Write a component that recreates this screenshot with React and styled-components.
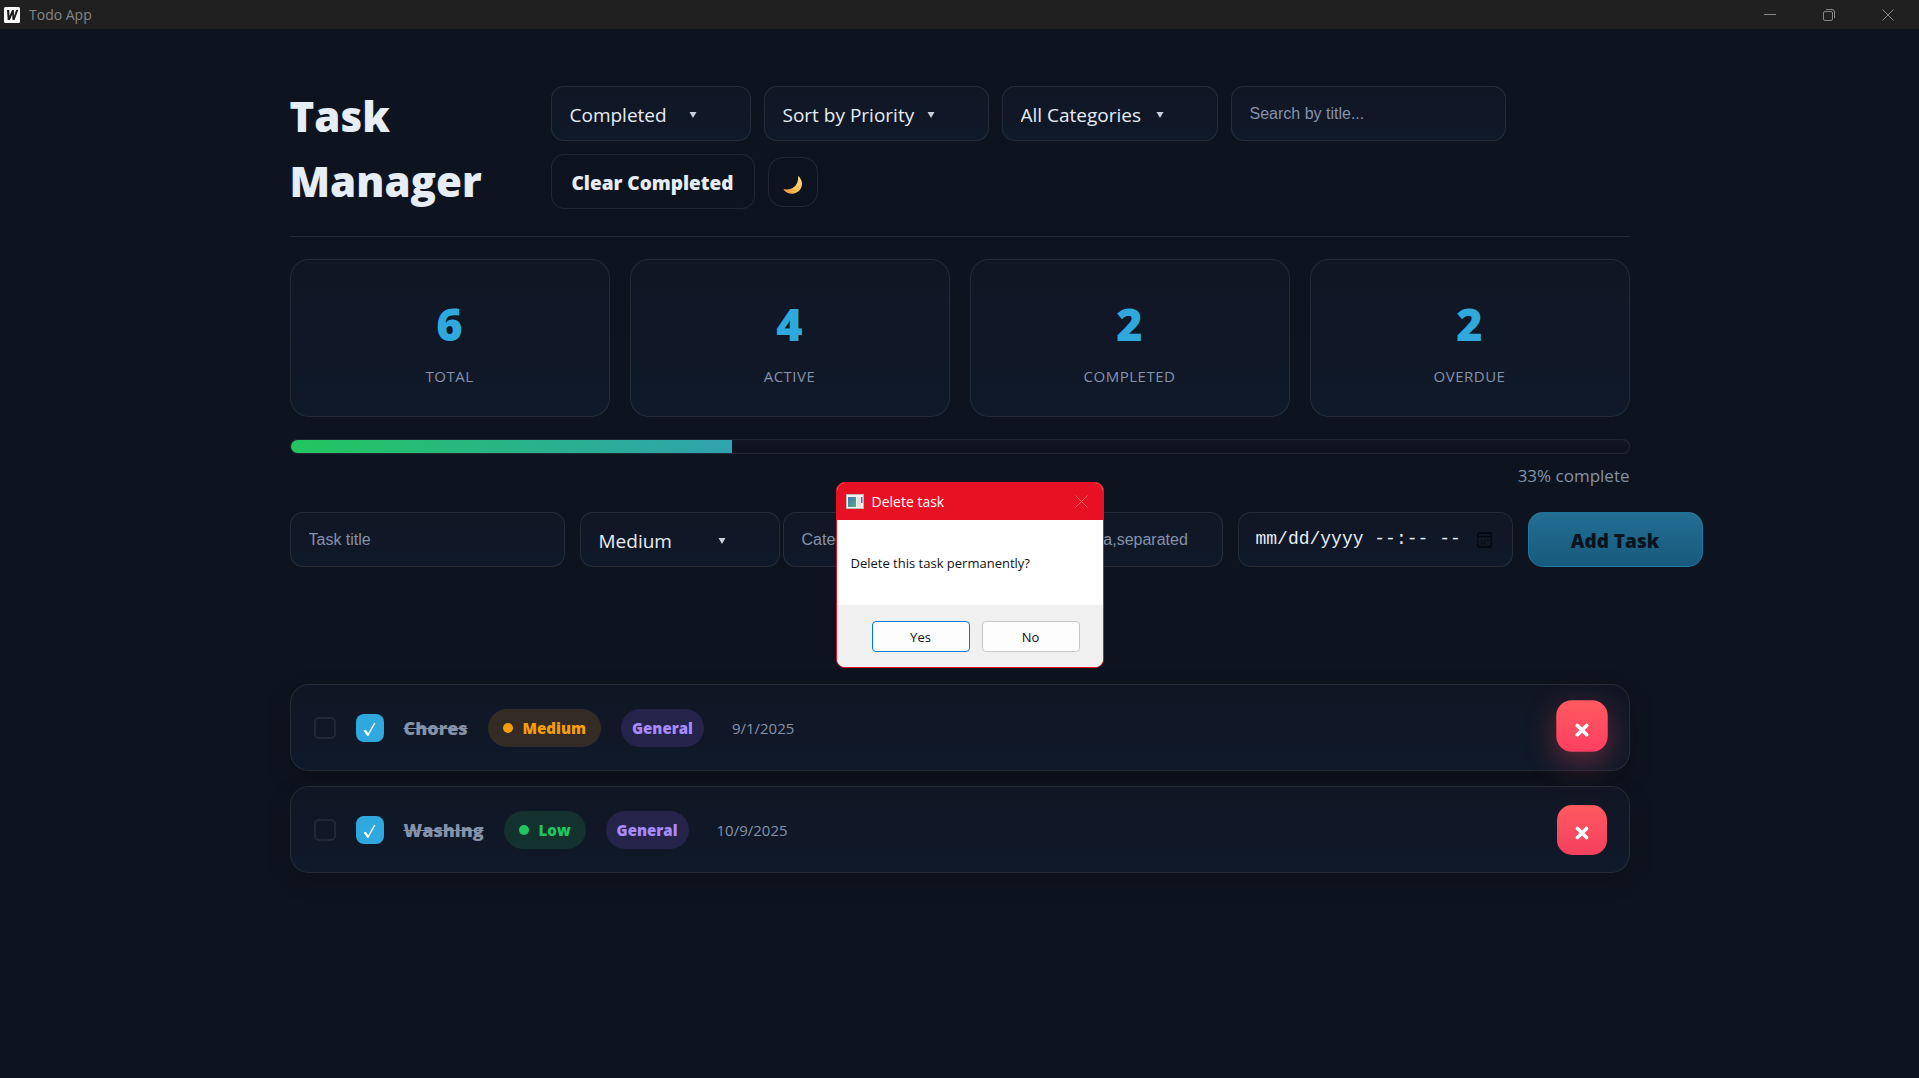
import React from "react";
import styled, { createGlobalStyle, css } from "styled-components";

const ui = `"Open Sans", "Noto Sans", sans-serif`;
const line = "rgba(255, 255, 255, 0.09)";
const panel = "linear-gradient(180deg, #111624 0%, #0f1929 100%)";

const GlobalStyle = createGlobalStyle`
  * { box-sizing: border-box; }
  body {
    margin: 0;
    min-height: 100vh;
    background: #0e141f;
    color: #e6edf5;
    font: 16px/24px ${ui};
  }
  button, select, input { font-family: inherit; color: inherit; margin: 0; }
  h1, h2, p, ul { margin: 0; padding: 0; }
`;

const WindowBar = styled.header`
  display: flex;
  align-items: center;
  height: 29px;
  padding: 0 2px 0 4px;
  gap: 9px;
  background: #202020;
  color: #868686;
  font-size: 14px;
  line-height: 20px;
`;

const WindowTitle = styled.span`
  flex: 1;
`;

const WindowButtons = styled.div`
  display: flex;
`;

const WindowButton = styled.button`
  width: 59px;
  height: 28px;
  display: grid;
  place-items: center;
  padding: 0;
  border: 0;
  background: none;
  color: #868686;
`;

const Page = styled.main`
  width: min(1340px, calc(100% - 48px));
  margin: 0 auto;
  padding: 54px 0 40px;
`;

const Header = styled.div`
  display: flex;
  align-items: flex-start;
  justify-content: space-between;
  padding-bottom: 23px;
  border-bottom: 1px solid ${line};
`;

const Title = styled.h1`
  width: 261px;
  font-size: 42px;
  line-height: 65px;
  font-weight: 800;
`;

const Controls = styled.div`
  flex: 1;
  display: flex;
  flex-wrap: wrap;
  align-items: center;
  gap: 13px;
  padding-top: 3px;
`;

const field = css`
  height: 55px;
  padding: 0 18px;
  border: 1px solid ${line};
  border-radius: 13px;
  background: ${panel};
`;

const SelectWrap = styled.div`
  position: relative;
  width: ${(p) => p.$width}px;

  svg {
    position: absolute;
    top: 26px;
    right: 54px;
    pointer-events: none;
  }
`;

const SelectBox = styled.select`
  ${field}
  appearance: none;
  width: 100%;
  padding-top: 2px;
  font-size: 19px;
  line-height: 28px;
`;

const TextBox = styled.input`
  ${field}
  width: ${(p) => p.$width || "100%"};
  min-width: 0;
  font: 16px "Liberation Sans", Arial, sans-serif;

  &::placeholder {
    color: #8492aa;
    opacity: 1;
  }
`;

const DateField = styled.div`
  ${field}
  display: flex;
  align-items: center;
  gap: 8px;
  padding: 0 20px 0 17px;
`;

const DateBox = styled.input`
  flex: 1;
  min-width: 0;
  padding: 0 0 2px;
  border: 0;
  background: none;
  font: 18px "Liberation Mono", "Courier New", monospace;

  &::placeholder {
    color: #e6edf5;
    opacity: 1;
  }
`;

const CalendarButton = styled.button`
  display: grid;
  padding: 0;
  border: 0;
  background: none;
  color: #05070b;
`;

const GhostButton = styled.button`
  height: 55px;
  width: 204px;
  padding: 2px 0 0;
  border: 1px solid ${line};
  border-radius: 13px;
  background: transparent;
  font-size: 19px;
  font-weight: 800;
`;

const ThemeButton = styled(GhostButton)`
  width: 50px;
  height: 50px;
  display: grid;
  place-items: center;
  padding-top: 6px;
  border-radius: 15px;
`;

const Stats = styled.section`
  display: grid;
  grid-template-columns: repeat(4, 1fr);
  gap: 20px;
  margin-top: 22px;
`;

const StatCard = styled.div`
  display: flex;
  flex-direction: column;
  align-items: center;
  gap: 6px;
  padding: 30px 0 28px;
  border: 1px solid ${line};
  border-radius: 19px;
  background: ${panel};
`;

const StatValue = styled.strong`
  color: #2fa9dd;
  font-size: 45px;
  line-height: 68px;
  font-weight: 800;
`;

const StatLabel = styled.span`
  color: #8492aa;
  font-size: 15px;
  line-height: 24px;
  letter-spacing: 0.5px;
  text-transform: uppercase;
`;

const Track = styled.div`
  height: 15px;
  margin-top: 22px;
  overflow: hidden;
  border: 1px solid ${line};
  border-radius: 8px;
  background: linear-gradient(180deg, #111524, #0c1220);
`;

const Fill = styled.div`
  height: 100%;
  background: linear-gradient(90deg, #22c55e, #2fa3b0);
`;

const ProgressNote = styled.p`
  margin-top: 8px;
  color: #8492aa;
  font-size: 17px;
  line-height: 27px;
  text-align: right;
`;

const AddForm = styled.form`
  display: grid;
  grid-template-columns: 275px 188px 205px 220px 275px 175px;
  gap: 15px;
  margin-top: 23px;
`;

const AddButton = styled.button`
  height: 55px;
  padding: 2px 0 0;
  border: 1px solid rgba(47, 169, 221, 0.3);
  border-radius: 15px;
  background: linear-gradient(180deg, #236e93, #165b7d);
  color: #0a141f;
  font-size: 19px;
  font-weight: 800;
`;

const TaskList = styled.ul`
  display: grid;
  gap: 15px;
  margin-top: 117px;
  list-style: none;
`;

const TaskRow = styled.li`
  display: flex;
  align-items: center;
  gap: 20px;
  height: 87px;
  padding: 0 22px 0 23px;
  border: 1px solid ${line};
  border-radius: 19px;
  background: ${panel};
  box-shadow: 0 8px 24px rgba(0, 0, 0, 0.18);
`;

const PickBox = styled.input`
  appearance: none;
  width: 22px;
  height: 22px;
  margin: 0;
  border: 2px solid #212838;
  border-radius: 5px;
`;

const DoneButton = styled.button`
  width: 28px;
  height: 28px;
  display: grid;
  place-items: center;
  padding: 2px 0 0;
  border: 0;
  border-radius: 8px;
  background: #2fa9dd;
  color: #fff;
`;

const TaskName = styled.span`
  color: #8492aa;
  font-size: 18px;
  font-weight: 800;
  text-decoration: line-through;
`;

const tones = {
  medium: ["#f59e0b", "#342b24"],
  low: ["#22c55e", "#12312f"],
  category: ["#a78bfa", "#26234a"],
};

const Pill = styled.span`
  display: flex;
  align-items: center;
  gap: 10px;
  height: 38px;
  padding: 0 ${(p) => (p.$tone === "category" ? 11 : 15)}px;
  border-radius: 19px;
  background: ${(p) => tones[p.$tone][1]};
  color: ${(p) => tones[p.$tone][0]};
  font-size: 15px;
  font-weight: 800;
`;

const Dot = styled.span`
  width: 10px;
  height: 10px;
  border-radius: 50%;
  background: currentColor;
`;

const DueDate = styled.time`
  flex: 1;
  padding-left: 8px;
  color: #8492aa;
  font-size: 15px;
`;

const DeleteButton = styled.button`
  width: 50px;
  height: 50px;
  display: grid;
  place-items: center;
  padding: 7px 0 0;
  border: 0;
  border-radius: 15px;
  background: linear-gradient(180deg, #ff5a5f, #f43f5e);
  color: #fff;
  ${(p) =>
    p.$active &&
    css`
      transform: translateY(-2px) scale(1.03);
      background: linear-gradient(180deg, #ff5a60, #ff3f60);
      box-shadow: 0 10px 30px rgba(255, 77, 90, 0.35);
    `}
`;

const Dialog = styled.div`
  position: fixed;
  top: 482px;
  left: calc(50% - 124px);
  width: 268px;
  overflow: hidden;
  border: 1px solid #e81123;
  border-radius: 9px;
  background: #fff;
  color: #111;
  font-size: 13px;
  line-height: 20px;
`;

const DialogHead = styled.div`
  display: flex;
  align-items: center;
  gap: 8px;
  height: 37px;
  padding: 0 15px 0 9px;
  background: #e81123;
  color: #fff;
`;

const DialogTitle = styled.h2`
  flex: 1;
  font-size: 14px;
  line-height: 20px;
  font-weight: 400;
`;

const DialogClose = styled.button`
  display: grid;
  padding: 0;
  border: 0;
  background: none;
  color: #f4626d;
`;

const DialogText = styled.p`
  height: 85px;
  padding: 33px 14px 0;
`;

const DialogFoot = styled.div`
  display: flex;
  justify-content: flex-end;
  gap: 12px;
  padding: 16px 23px 15px;
  background: #f0f0f0;
`;

const DialogButton = styled.button`
  width: 98px;
  height: 31px;
  padding: 0;
  border: 1px solid ${(p) => (p.$primary ? "#0078d4" : "#c8c8c8")};
  border-radius: 4px;
  background: #fdfdfd;
  font-size: 13px;
`;

function Select({ label, value, options, width }) {
  return (
    <SelectWrap $width={width}>
      <SelectBox aria-label={label} defaultValue={value}>
        {options.map((o) => (
          <option key={o}>{o}</option>
        ))}
      </SelectBox>
      <svg width="8" height="6" viewBox="0 0 8 6">
        <path d="M0.5 0h7L4 6z" fill="#c9d1db" />
      </svg>
    </SelectWrap>
  );
}

function Moon() {
  return (
    <svg width="20" height="20" viewBox="0 0 20 20">
      <defs>
        <linearGradient id="moon" x1="0" y1="1" x2="1" y2="0">
          <stop offset="0" stopColor="#f08a3c" />
          <stop offset="0.45" stopColor="#ffc35c" />
          <stop offset="1" stopColor="#ffe08a" />
        </linearGradient>
      </defs>
      <path d="M15 1c3.600 2.600 5 7.400 3.200 11.600C16 18 9.600 20.400 4.400 17.800 2.700 17 1.300 15.700.4 14.100c5 1 9.300-.2 12-3.300C14.600 8.200 15.500 5 15 1z" fill="url(#moon)" />
      <circle cx="15.500" cy="12.500" r="1" fill="#f3aa4d" />
      <circle cx="11" cy="15.500" r="0.900" fill="#f3aa4d" />
    </svg>
  );
}

function Cross() {
  return (
    <svg width="14" height="14" viewBox="0 0 14 14" fill="none" stroke="currentColor">
      <path d="M2.500 2.500l9 9M11.500 2.500l-9 9" strokeWidth="3.600" strokeLinecap="round" />
    </svg>
  );
}

function Calendar() {
  return (
    <svg width="15" height="16" viewBox="0 0 15 16" fill="none" stroke="currentColor">
      <rect x="0.750" y="1" width="13.500" height="14" rx="2" strokeWidth="1.300" />
      <path d="M1 4.500h13" strokeWidth="1.200" />
      <path d="M4 8.500h1.500M7 8.500h1.500M10 8.500h1.500M4 11.500h1.500M7 11.500h1.500" strokeWidth="1.500" />
    </svg>
  );
}

const stats = [
  ["6", "Total"],
  ["4", "Active"],
  ["2", "Completed"],
  ["2", "Overdue"],
];

const tasks = [
  { name: "Chores", tone: "medium", priority: "Medium", due: "9/1/2025", active: true },
  { name: "Washing", tone: "low", priority: "Low", due: "10/9/2025" },
];

export default function App() {
  return (
    <>
      <GlobalStyle />
      <WindowBar>
        <svg width="16" height="16" viewBox="0 0 16 16">
          <rect width="16" height="16" rx="1.500" fill="#fff" />
          <path d="M3 3h2.300l.1 6L8 3h1.800l.3 6L12 3h2.200l-3.600 10H8.500L8.200 7.500 5.900 13H3.700z" fill="#1c1c1c" />
        </svg>
        <WindowTitle>Todo App</WindowTitle>
        <WindowButtons>
          <WindowButton aria-label="Minimize">
            <svg width="12" height="12" stroke="currentColor"><path d="M0 5.500h12" /></svg>
          </WindowButton>
          <WindowButton aria-label="Restore">
            <svg width="12" height="12" fill="none" stroke="currentColor">
              <rect x="0.500" y="2.500" width="9" height="9" rx="1.500" />
              <path d="M3 .5h6a2.500 2.500 0 0 1 2.500 2.500v6" />
            </svg>
          </WindowButton>
          <WindowButton aria-label="Close">
            <svg width="12" height="12" stroke="currentColor"><path d="M.5.5l11 11M11.500.5l-11 11" /></svg>
          </WindowButton>
        </WindowButtons>
      </WindowBar>

      <Page>
        <Header>
          <Title>Task Manager</Title>
          <Controls>
            <Select label="Filter" value="Completed" options={["All", "Active", "Completed"]} width={200} />
            <Select label="Sort" value="Sort by Priority" options={["Sort by Date", "Sort by Priority"]} width={225} />
            <Select label="Category" value="All Categories" options={["All Categories", "General"]} width={216} />
            <TextBox $width="275px" type="search" aria-label="Search" placeholder="Search by title..." />
            <GhostButton>Clear Completed</GhostButton>
            <ThemeButton aria-label="Toggle theme"><Moon /></ThemeButton>
          </Controls>
        </Header>

        <Stats>
          {stats.map(([value, label]) => (
            <StatCard key={label}>
              <StatValue>{value}</StatValue>
              <StatLabel>{label}</StatLabel>
            </StatCard>
          ))}
        </Stats>

        <Track role="progressbar" aria-valuenow={33} aria-label="Completion">
          <Fill style={{ width: "33%" }} />
        </Track>
        <ProgressNote>33% complete</ProgressNote>

        <AddForm onSubmit={(e) => e.preventDefault()}>
          <TextBox aria-label="Task title" placeholder="Task title" />
          <Select label="Priority" value="Medium" options={["High", "Medium", "Low"]} width={200} />
          <TextBox aria-label="Category" placeholder="Category" />
          <TextBox aria-label="Tags" placeholder="Tags comma,separated" />
          <DateField>
            <DateBox aria-label="Due date" placeholder="mm/dd/yyyy --:-- --" />
            <CalendarButton type="button" aria-label="Open calendar"><Calendar /></CalendarButton>
          </DateField>
          <AddButton>Add Task</AddButton>
        </AddForm>

        <TaskList>
          {tasks.map((t) => (
            <TaskRow key={t.name}>
              <PickBox type="checkbox" aria-label={`Select ${t.name}`} />
              <DoneButton aria-label={`Mark ${t.name} as active`}>
                <svg width="14" height="14" viewBox="0 0 14 14" fill="none" stroke="currentColor" strokeLinecap="round">
                  <path d="M2 9l3 4L11.500 1.500" strokeWidth="1.400" />
                  <path d="M2.200 8.800l2.600 3.700" strokeWidth="2.200" />
                </svg>
              </DoneButton>
              <TaskName>{t.name}</TaskName>
              <Pill $tone={t.tone}>
                <Dot />
                {t.priority}
              </Pill>
              <Pill $tone="category">General</Pill>
              <DueDate>{t.due}</DueDate>
              <DeleteButton $active={t.active} aria-label={`Delete ${t.name}`}><Cross /></DeleteButton>
            </TaskRow>
          ))}
        </TaskList>
      </Page>

      <Dialog role="dialog" aria-labelledby="dialog-title">
        <DialogHead>
          <svg width="18" height="15" viewBox="0 0 18 15">
            <defs>
              <linearGradient id="pane" x1="0" y1="0" x2="1" y2="1">
                <stop offset="0" stopColor="#3f74b5" />
                <stop offset="1" stopColor="#56b27a" />
              </linearGradient>
            </defs>
            <rect x="0.500" y="0.500" width="17" height="14" fill="#f2f2f2" stroke="#b9b9b9" />
            <rect x="2" y="3" width="8" height="10" fill="url(#pane)" />
            <rect x="11" y="3" width="4" height="10" fill="#e2e4e6" />
            <rect x="15" y="3" width="1.500" height="6" fill="#3f74b5" />
          </svg>
          <DialogTitle id="dialog-title">Delete task</DialogTitle>
          <DialogClose aria-label="Close dialog">
            <svg width="13" height="13" stroke="currentColor"><path d="M.5.5l12 12M12.500.5l-12 12" /></svg>
          </DialogClose>
        </DialogHead>
        <DialogText>Delete this task permanently?</DialogText>
        <DialogFoot>
          <DialogButton $primary>Yes</DialogButton>
          <DialogButton>No</DialogButton>
        </DialogFoot>
      </Dialog>
    </>
  );
}
